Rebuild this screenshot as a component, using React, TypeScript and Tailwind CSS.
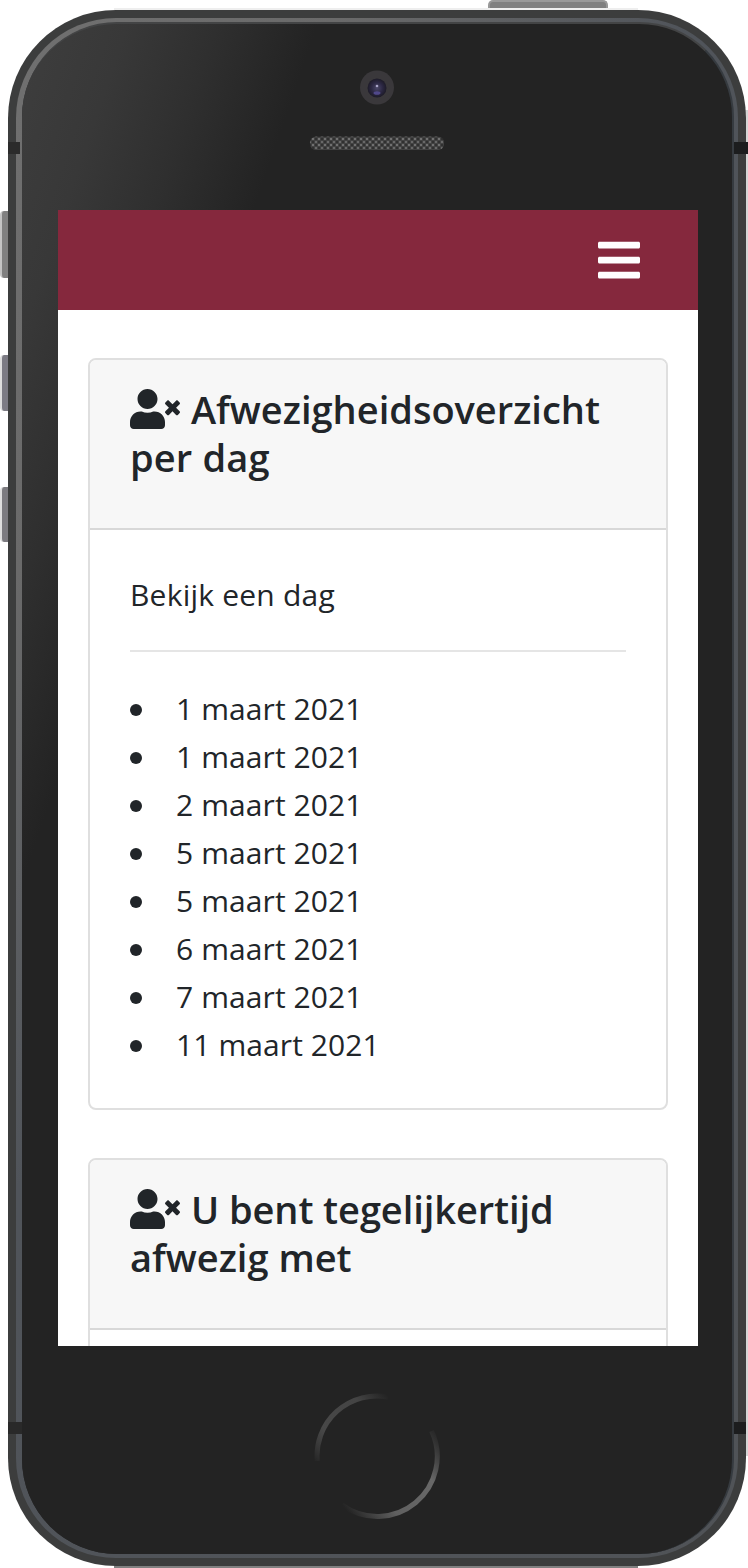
import { FaBars, FaUserTimes } from "react-icons/fa";
import type { ReactNode } from "react";

const days = [
  "1 maart 2021",
  "1 maart 2021",
  "2 maart 2021",
  "5 maart 2021",
  "5 maart 2021",
  "6 maart 2021",
  "7 maart 2021",
  "11 maart 2021",
];

function CardHeader({ children }: { children: ReactNode }) {
  return (
    <div className="h-[170px] shrink-0 border-b-2 border-[#d8d8d8] bg-[#f7f7f7] px-10 pt-[25px]">
      <h5 className="text-[38px] leading-[48px] font-semibold">{children}</h5>
    </div>
  );
}

function TitleIcon() {
  return <FaUserTimes className="mr-[11px] inline-block h-10 w-[50px] align-[-5px]" />;
}

function Screen() {
  return (
    <div className="flex h-[1136px] w-[640px] flex-col overflow-hidden bg-white text-[#212529]">
      <nav className="flex h-[100px] shrink-0 items-center justify-end bg-[#85283d] pr-[58px]">
        <FaBars className="h-12 w-[42px] text-white" />
      </nav>
      <main className="flex flex-col gap-12 px-[30px] pt-12">
        <section className="flex h-[752px] shrink-0 flex-col overflow-hidden rounded-lg border-2 border-[#dfdfdf]">
          <CardHeader>
            <TitleIcon />
            <span>Afwezigheidsoverzicht</span>
            <br />
            <span className="tracking-[0.150px]">per dag</span>
          </CardHeader>
          <div className="flex flex-col px-10 pt-[41px] text-[30px] leading-[48px]">
            <p className="tracking-[0.220px]">Bekijk een dag</p>
            <hr className="mt-[31px] mb-[33px] border-t-2 border-[#e5e5e5]" />
            <ul className="flex flex-col tracking-[0.1px]">
              {days.map((day, i) => (
                <li key={i} className="flex items-center">
                  <span className="mt-[2px] mr-[34px] size-3 rounded-full bg-[#212529]" />
                  <span>{day}</span>
                </li>
              ))}
            </ul>
          </div>
        </section>
        <section className="flex h-[400px] shrink-0 flex-col overflow-hidden rounded-lg border-2 border-[#dfdfdf]">
          <CardHeader>
            <TitleIcon />
            <span className="tracking-[-0.080px]">U bent tegelijkertijd</span>
            <br />
            <span>afwezig met</span>
          </CardHeader>
        </section>
      </main>
    </div>
  );
}

function CameraAndSpeaker() {
  return (
    <svg className="block h-[186px] w-[710px]" viewBox="22 24 710 186">
      <defs>
        <pattern id="mesh" width="6" height="6" patternUnits="userSpaceOnUse">
          <rect width="6" height="6" fill="#424242" />
          <rect width="2" height="2" fill="#707070" />
          <rect x="3" y="3" width="2" height="2" fill="#686868" />
          <rect x="3" width="2" height="2" fill="#303030" />
          <rect y="3" width="2" height="2" fill="#303030" />
        </pattern>
        <radialGradient id="lens">
          <stop offset="0" stopColor="#4a4768" />
          <stop offset="0.6" stopColor="#2b2742" />
          <stop offset="1" stopColor="#1d1b27" />
        </radialGradient>
      </defs>
      <circle cx="377" cy="87.5" r="17" fill="#3a383b" />
      <circle cx="377" cy="88" r="9.5" fill="url(#lens)" />
      <ellipse cx="377" cy="93" rx="3.5" ry="1.8" fill="#50488a" />
      <circle cx="377" cy="86" r="1.3" fill="#aaa5c8" />
      <rect x="310" y="136.500" width="134" height="13.500" rx="6" fill="url(#mesh)" />
    </svg>
  );
}

function HomeButton() {
  return (
    <svg className="mt-[47px] ml-[292px] block size-[126px]" viewBox="0 0 126 126" fill="none">
      <defs>
        <linearGradient id="upper" x1="3" y1="72" x2="74" y2="3" gradientUnits="userSpaceOnUse">
          <stop offset="0" stopColor="#555" stopOpacity="0" />
          <stop offset="0.3" stopColor="#484848" />
          <stop offset="0.75" stopColor="#444" />
          <stop offset="1" stopColor="#444" stopOpacity="0" />
        </linearGradient>
        <linearGradient id="lower" x1="28" y1="112" x2="121" y2="34" gradientUnits="userSpaceOnUse">
          <stop offset="0" stopColor="#666" stopOpacity="0" />
          <stop offset="0.3" stopColor="#606060" />
          <stop offset="0.7" stopColor="#686868" />
          <stop offset="1" stopColor="#555" stopOpacity="0" />
        </linearGradient>
      </defs>
      <path d="M3.200 68A60 60 0 0 1 74 4" stroke="url(#upper)" strokeWidth="5" />
      <path d="M28 112A60 60 0 0 0 117.600 38" stroke="url(#lower)" strokeWidth="5" />
    </svg>
  );
}

export default function App() {
  return (
    <div className="relative h-[1568px] w-[748px] overflow-hidden bg-white pt-[10px] pl-2 font-['Open_Sans','Noto_Sans',sans-serif]">
      <div className="absolute top-0 left-[488px] h-[11px] w-[120px] rounded-t-[5px] border-x-2 border-t-2 border-[#999999] bg-[#808080]" />
      <div className="absolute top-[211px] left-0 h-[67px] w-3 rounded-l-[4px] border-l-2 border-[#c4c4c4] bg-[#808080]" />
      <div className="absolute top-[355px] left-0 h-[56px] w-3 rounded-l-[4px] border-l-2 border-[#dedede] bg-[#7c7b84]" />
      <div className="absolute top-[487px] left-0 h-[55px] w-3 rounded-l-[4px] border-l-2 border-[#dedede] bg-[#7c7b80]" />
      <div className="absolute top-[110px] left-[740px] h-[1346px] w-2 bg-[#d5d5d5]" />
      <div className="absolute top-[1560px] left-[114px] h-2 w-[524px] bg-[#808080]" />
      <div className="absolute top-[8px] left-[114px] h-2 w-[524px] bg-[#eeeeee]" />

      <div className="relative h-[1556px] w-[738px] rounded-[108px] bg-[#3c3d3d] p-2">
        <div className="h-full rounded-[100px] bg-[linear-gradient(120deg,#707070_0%,#6a6a6a_20%,#50545a_42%,#505357_100%)] pt-1 pr-1 pb-1 pl-[6px]">
          <div className="flex h-full flex-col rounded-[95px] border-t-2 border-r-2 border-t-[#434445] border-r-[#363b40] bg-[#232323] bg-[linear-gradient(109deg,#3e3e3e_0px,#383838_100px,#2f2f2f_185px,#232323_280px,#232323_100%)]">
            <CameraAndSpeaker />
            <div className="pl-9">
              <Screen />
            </div>
            <HomeButton />
          </div>
        </div>
        <div className="absolute top-[132px] left-0 h-3 w-3 bg-[#2b2b2b]" />
        <div className="absolute top-[132px] left-[726px] h-3 w-[14px] bg-[#1c1d1e]" />
        <div className="absolute top-[1412px] left-0 h-3 w-[14px] bg-[#292929]" />
        <div className="absolute top-[1412px] left-[726px] h-3 w-3 bg-[#1c1d1e]" />
      </div>
    </div>
  );
}
